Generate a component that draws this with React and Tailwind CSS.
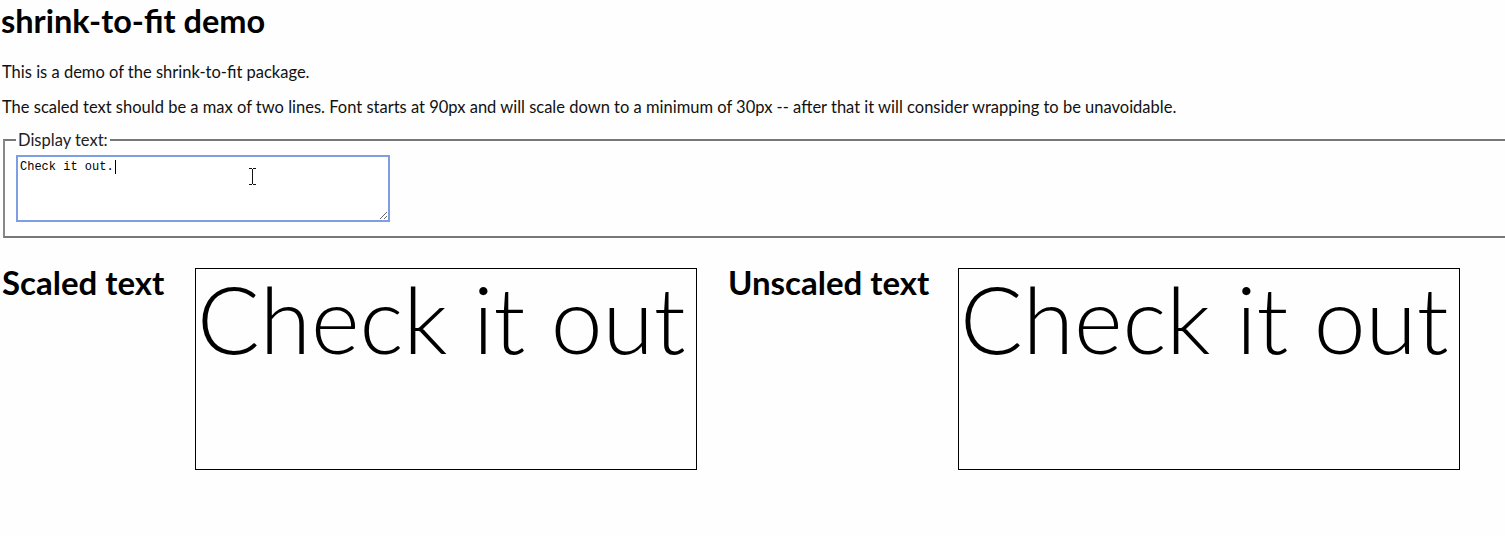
import React, { useState } from 'react';

const font = { fontFamily: 'Lato, "Noto Sans", sans-serif' };

const FitBox = ({ text }) => (
  <div className="w-[502px] h-[202px] shrink-0 border border-black">
    <div className="text-[93px] font-light leading-[1.05] text-black pl-[1px] pt-[1px] whitespace-nowrap">{text}</div>
  </div>
);

const App = () => {
  const [value, setValue] = useState('Check it out.');
  const shown = value.replace(/\.$/, '');

  return (
    <div className="w-[1505px] h-[536px] overflow-hidden bg-[#fefefe] text-[#111]" style={font}>
      <h1 className="text-[32.5px] font-bold leading-[38px] pl-[1px] pt-[2px] text-black">shrink-to-fit demo</h1>
      <p className="text-[16.5px] leading-5 pl-[2px] mt-[22px]">This is a demo of the shrink-to-fit package.</p>
      <p className="text-[16.5px] leading-5 pl-[2px] mt-[15px]">
        The scaled text should be a max of two lines. Font starts at 90px and will scale down to a minimum of 30px -- after that it will consider wrapping to be unavoidable.
      </p>

      <fieldset className="ml-[3px] mt-[13px] w-[1520px] border-2 border-[#888] border-t-[#777] border-b-[#777] pl-[11px] pt-[2px] pb-[14px]">
        <legend className="text-[16.5px] leading-5 px-[2px] text-[#222]">Display text:</legend>
        <div className="relative w-[374px] h-[67px] mt-[3px]">
          <textarea
            value={value}
            onChange={(e) => setValue(e.target.value)}
            className="w-full h-full border-2 border-[#7f9de3] outline-none bg-white px-[2px] pt-[3px] text-[12px] leading-[14px] resize-y text-black"
            style={{ fontFamily: '"Liberation Mono", "DejaVu Sans Mono", monospace' }}
          />
          <span className="absolute left-[99px] top-[5px] w-px h-[14px] bg-black" />
          <svg className="absolute left-[232px] top-[13px]" width="9" height="17" viewBox="0 0 9 17">
            <path d="M1 0.5h3M5 0.5h3M4.5 1v15M1 16.5h3M5 16.5h3" stroke="#111" strokeWidth="1" fill="none" />
          </svg>
        </div>
      </fieldset>

      <div className="flex items-start mt-[30px] pl-[2px]">
        <h2 className="w-[193px] shrink-0 text-[33px] font-bold leading-[28px] text-black whitespace-nowrap">Scaled text</h2>
        <FitBox text={shown} />
        <h2 className="w-[261px] shrink-0 pl-[31px] text-[33px] font-bold leading-[28px] text-black whitespace-nowrap">Unscaled text</h2>
        <FitBox text={shown} />
      </div>
    </div>
  );
};

export default App;
